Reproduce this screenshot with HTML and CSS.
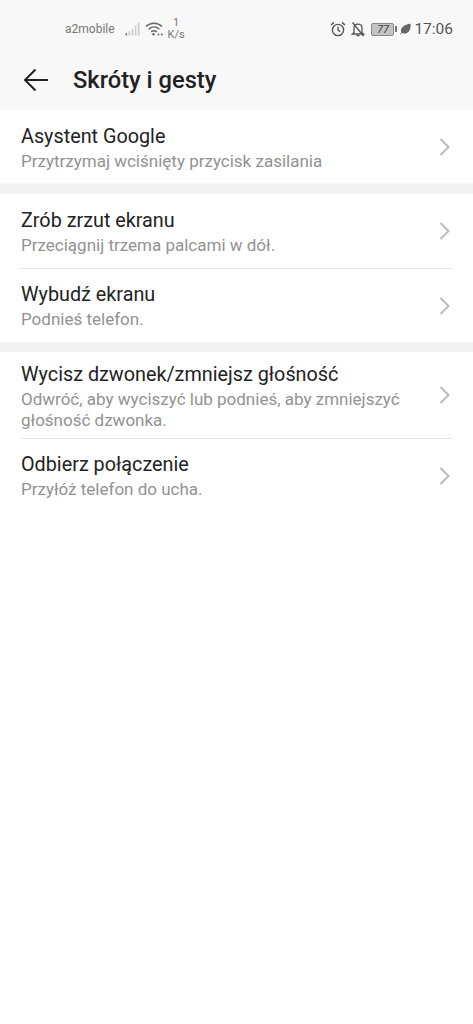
FILE: index.html
```html
<!DOCTYPE html>
<html lang="pl">
<head>
  <meta charset="UTF-8">
  <meta name="viewport" content="width=device-width, initial-scale=1.0">
  <title>Skróty i gesty</title>
  <link rel="stylesheet" href="styles.css">
</head>
<body>

  <div class="status-bar">
    <div class="status-left">
      <span class="carrier">a2mobile</span>
      <svg class="signal" width="17" height="16" viewBox="0 0 17 16">
        <rect x="0.5" y="12" width="1.6" height="2.5" fill="#777"/>
        <rect x="3.6" y="10" width="1.6" height="4.5" fill="#ccc"/>
        <rect x="6.7" y="7.5" width="1.6" height="7" fill="#ccc"/>
        <rect x="9.8" y="4.5" width="1.6" height="10" fill="#ccc"/>
        <rect x="12.9" y="1.5" width="1.6" height="13" fill="#ccc"/>
      </svg>
      <svg class="wifi" width="19" height="16" viewBox="0 0 19 16" fill="none" stroke="#666" stroke-width="1.5">
        <path d="M1 5.5C5.5 1 12.5 1 17 5.5"/>
        <path d="M3.6 8.2C6.8 5.2 11.2 5.2 14.4 8.2"/>
        <path d="M6.2 10.8C8 9.4 10 9.4 11.8 10.8"/>
        <circle cx="8.5" cy="13.2" r="1.2" fill="#666" stroke="none"/>
        <circle cx="13.5" cy="13.6" r="1" fill="#666" stroke="none"/>
        <circle cx="16.8" cy="13.6" r="1" fill="#666" stroke="none"/>
      </svg>
      <div class="speed">
        <span>1</span>
        <span>K/s</span>
      </div>
    </div>
    <div class="status-right">
      <svg class="alarm" width="16" height="16" viewBox="0 0 16 16" fill="none" stroke="#555" stroke-width="1.4">
        <circle cx="8" cy="9" r="5.6"/>
        <path d="M8 5.8V9.2L10.2 10.6"/>
        <path d="M1 4L4 1.4M15 4L12 1.4"/>
      </svg>
      <svg class="bell" width="16" height="16" viewBox="0 0 16 16" fill="none" stroke="#555" stroke-width="1.3">
        <path d="M4 11.8V7.2C4 5 5.6 3.2 8 3.2C10.4 3.2 12 5 12 7.2V11.8L13.6 13H2.4L4 11.8Z"/>
        <path d="M6.5 14.6H9.5"/>
        <path d="M2.5 1.5L13.5 15"/>
      </svg>
      <div class="battery">
        <div class="battery-body">77</div>
        <div class="battery-tip"></div>
      </div>
      <svg class="leaf" width="11" height="12" viewBox="0 0 11 12">
        <path d="M10.6 0.8C10.8 6 9.4 10.4 4.2 10.6C3.2 10.6 2.4 10.3 1.8 9.8L0.8 11.4L0.2 11L1.3 9.2C-0.2 6.4 2.6 1.6 10.6 0.8Z" fill="#666"/>
      </svg>
      <span class="clock">17:06</span>
    </div>
  </div>

  <header class="app-bar">
    <svg class="back" width="26" height="24" viewBox="0 0 26 24" fill="none" stroke="#222" stroke-width="2">
      <path d="M25 12H2"/>
      <path d="M12.5 1.5L2 12L12.5 22.5"/>
    </svg>
    <h1>Skróty i gesty</h1>
  </header>

  <section class="group group-first">
    <a class="row row-short">
      <div class="row-text">
        <div class="row-title">Asystent Google</div>
        <div class="row-sub">Przytrzymaj wciśnięty przycisk zasilania</div>
      </div>
      <svg class="chevron" width="11" height="18" viewBox="0 0 11 18" fill="none" stroke="#bbb" stroke-width="2"><path d="M1.5 1L9.5 9L1.5 17"/></svg>
    </a>
  </section>

  <section class="group">
    <a class="row">
      <div class="row-text">
        <div class="row-title">Zrób zrzut ekranu</div>
        <div class="row-sub">Przeciągnij trzema palcami w dół.</div>
      </div>
      <svg class="chevron" width="11" height="18" viewBox="0 0 11 18" fill="none" stroke="#bbb" stroke-width="2"><path d="M1.5 1L9.5 9L1.5 17"/></svg>
    </a>
    <a class="row">
      <div class="row-text">
        <div class="row-title">Wybudź ekranu</div>
        <div class="row-sub">Podnieś telefon.</div>
      </div>
      <svg class="chevron" width="11" height="18" viewBox="0 0 11 18" fill="none" stroke="#bbb" stroke-width="2"><path d="M1.5 1L9.5 9L1.5 17"/></svg>
    </a>
  </section>

  <section class="group group-last">
    <a class="row row-tall">
      <div class="row-text">
        <div class="row-title">Wycisz dzwonek/zmniejsz głośność</div>
        <div class="row-sub">Odwróć, aby wyciszyć lub podnieś, aby zmniejszyć głośność dzwonka.</div>
      </div>
      <svg class="chevron" width="11" height="18" viewBox="0 0 11 18" fill="none" stroke="#bbb" stroke-width="2"><path d="M1.5 1L9.5 9L1.5 17"/></svg>
    </a>
    <a class="row">
      <div class="row-text">
        <div class="row-title">Odbierz połączenie</div>
        <div class="row-sub">Przyłóż telefon do ucha.</div>
      </div>
      <svg class="chevron" width="11" height="18" viewBox="0 0 11 18" fill="none" stroke="#bbb" stroke-width="2"><path d="M1.5 1L9.5 9L1.5 17"/></svg>
    </a>
  </section>

</body>
</html>
```

FILE: styles.css
```css
:root {
  --header-color: #f8f8f8;
  --page-color: #f3f3f3;
  --title-color: #222;
  --sub-color: #929292;
  --line-color: #e4e4e4;
}
html, body {
  height: 100%;
}
body {
  display: flex;
  flex-direction: column;
  margin: 0;
  background-color: var(--page-color);
  color: var(--title-color);
  font-family: Roboto, "Liberation Sans", sans-serif;
}
.status-bar {
  display: flex;
  justify-content: space-between;
  align-items: center;
  height: 58px;
  padding: 0 20px 0 65px;
  background-color: var(--header-color);
  color: #666;
}
.status-left, .status-right {
  display: flex;
  align-items: center;
}
.carrier {
  font-size: 12px;
  color: #777;
  margin-right: 10px;
}
.wifi {
  margin-left: 3px;
}
.speed {
  display: flex;
  flex-direction: column;
  align-items: center;
  margin-left: 4px;
  font-size: 11px;
  line-height: 12px;
  color: #777;
}
.alarm {
  margin-right: 4px;
}
.battery {
  display: flex;
  align-items: center;
  margin-left: 5px;
  margin-right: 3px;
}
.battery-body {
  width: 23px;
  height: 13px;
  box-sizing: border-box;
  border: 1px solid #888;
  border-radius: 2px;
  background-color: #c4c4c4;
  font-size: 11px;
  font-style: italic;
  line-height: 11px;
  text-align: center;
  color: #444;
}
.battery-tip {
  width: 2px;
  height: 6px;
  margin-left: 1px;
  background-color: #777;
}
.leaf {
  margin-right: 3px;
}
.clock {
  font-size: 15.5px;
  color: #555;
}
.app-bar {
  display: flex;
  align-items: center;
  height: 44px;
  padding: 0 0 8px 23px;
  background-color: var(--header-color);
}
.back {
  margin-right: 24px;
}
.app-bar h1 {
  margin: 0;
  font-size: 23.7px;
  font-weight: 500;
}
.group {
  background-color: #fff;
  margin-bottom: 10px;
}
.group-first {
  margin-bottom: 11px;
}
.group-last {
  flex: 1;
  margin-bottom: 0;
}
.row {
  display: flex;
  align-items: center;
  justify-content: space-between;
  height: 75px;
  margin: 0 21px;
  box-sizing: border-box;
  border-bottom: 1px solid var(--line-color);
}
.row:last-child {
  height: 73px;
  border-bottom: none;
}
.row-tall {
  height: 87px;
}
.row-text {
  align-self: flex-start;
  width: 390px;
  padding-top: 14px;
}
.row + .row .row-text {
  padding-top: 13px;
}
.row-tall .row-text {
  padding-top: 10px;
}
.row-title {
  font-size: 19.8px;
  line-height: 26px;
}
.row-sub {
  margin-top: 1px;
  font-size: 17px;
  line-height: 21px;
  color: var(--sub-color);
}
.chevron {
  margin-right: 2px;
}
```
